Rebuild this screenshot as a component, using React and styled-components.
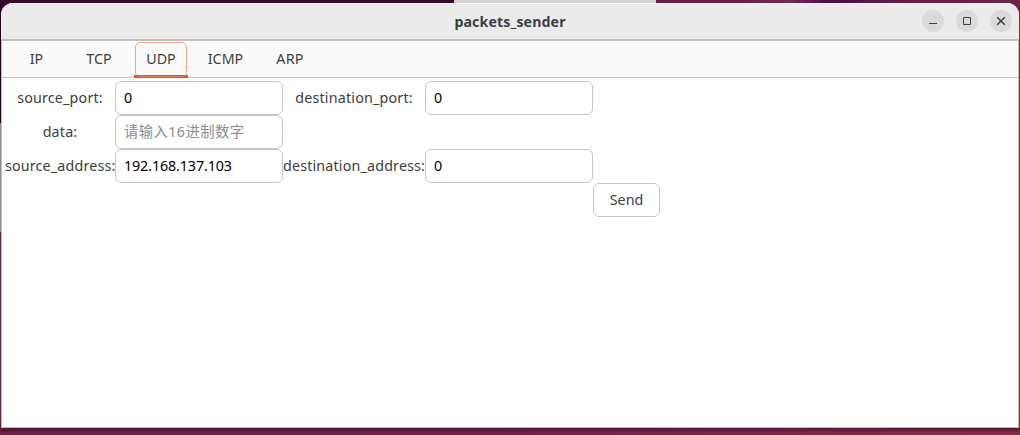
import React from 'react';
import styled, { createGlobalStyle } from 'styled-components';

const GlobalStyle = createGlobalStyle`
  * { box-sizing: border-box; }
  body { margin: 0; overflow: hidden; }
`;

const Desktop = styled.div`
  width: 1020px;
  height: 435px;
  padding: 3px 1px 7px;
  font-family: 'Noto Sans', 'Noto Sans CJK SC', sans-serif;
  font-size: 14.3px;
  color: #3d3d3d;
  background:
    linear-gradient(#24061e 0 0) 0 0 / 1px 123px no-repeat,
    linear-gradient(#8f8f8f 0 0) 0 123px / 1px 109px no-repeat,
    linear-gradient(90deg, #350a2a 0 454px, #d2d2d2 454px 656px, #65204a 656px 740px, #752a55 790px, #4d0a49 830px, #5d1c46 880px, #6d2448 1020px) 0 0 / 100% 20px no-repeat,
    linear-gradient(rgba(50, 10, 36, 0.6), transparent) 0 428px / 100% 5px no-repeat,
    linear-gradient(90deg, #6d2148, #6f214b 40%, #852c49);
`;

const Window = styled.main`
  display: flex;
  flex-direction: column;
  height: 425px;
  background: #fff;
  border-radius: 12px 12px 0 0;
  overflow: hidden;
`;

const TitleBar = styled.header`
  display: grid;
  grid-template-columns: 1fr auto 1fr;
  align-items: center;
  flex: 0 0 38px;
  padding-right: 7px;
  background: #ebebeb;
  border-top: 1px solid #f8f8f8;
  border-bottom: 2px solid #bfbfbf;
`;

const Title = styled.h1`
  grid-column: 2;
  margin: 0 0 0 7px;
  font-size: 14.2px;
  line-height: 20px;
  font-weight: 700;
  letter-spacing: ${(p) => p.$spacing}px;
`;

const WindowControls = styled.div`
  display: flex;
  justify-content: flex-end;
  gap: 12px;
  margin-top: -1px;
`;

const ControlButton = styled.button`
  display: flex;
  width: 22px;
  height: 22px;
  padding: 0;
  border: 0;
  border-radius: 50%;
  background: #dadada;
  color: #3d3d3d;
`;

const Body = styled.div`
  flex: 1;
  border: 1px solid #bdbdbd;
  border-top: 0;
`;

const TabBar = styled.nav`
  display: flex;
  height: 37px;
  background: #fafafa;
  border-bottom: 1px solid #c5c5c5;
`;

const Tab = styled.button`
  width: ${(p) => p.$width}px;
  height: 37px;
  margin: 0 0 0 ${(p) => p.$gap || 0}px;
  padding: 1px 1px 0;
  border: 0;
  background: ${(p) => (p.$active ? 'linear-gradient(#e95420 0 0) 0 100% / 100% 3px no-repeat' : 'transparent')};
  color: inherit;
  font: inherit;
  letter-spacing: ${(p) => p.$spacing}px;
`;

const TabFocus = styled.span`
  display: block;
  height: 35px;
  margin-bottom: 1px;
  line-height: 32px;
  border: 1px solid ${(p) => (p.$active ? 'rgba(240, 132, 96, 0.75)' : 'transparent')};
  border-radius: 5px;
`;

const Form = styled.form`
  display: grid;
  grid-template-columns: 110px 168px 142px 168px 67px;
  grid-auto-rows: 34px;
  padding: 3px 0 0 3px;
`;

const Label = styled.label`
  grid-column: ${(p) => p.$column};
  text-align: center;
  line-height: 33px;
  white-space: nowrap;
  letter-spacing: ${(p) => p.$spacing}px;
`;

const Field = styled.input`
  width: 100%;
  height: 34px;
  padding: 0 8px 1px;
  border: 1px solid #c6c6c6;
  border-radius: 6px;
  outline: 0;
  background: #fff;
  color: #000;
  font: inherit;
  letter-spacing: ${(p) => p.$spacing || 0}px;
  &::placeholder { color: #8b8b8b; opacity: 1; }
`;

const SendButton = styled.button`
  grid-column: 5;
  grid-row: 4;
  padding: 0 0 1px;
  border: 1px solid #c6c6c6;
  border-radius: 6px;
  background: #fff;
  color: inherit;
  font: inherit;
`;

const tabs = [
  { name: 'IP', width: 69, spacing: 0 },
  { name: 'TCP', width: 56, spacing: 0 },
  { name: 'UDP', width: 54, gap: 7, spacing: 0, active: true },
  { name: 'ICMP', width: 75, spacing: 0 },
  { name: 'ARP', width: 54, spacing: 0.2 },
];

function ControlIcon({ children }) {
  return (
    <svg width="22" height="22" viewBox="0 0 22 22" fill="none" stroke="currentColor">
      {children}
    </svg>
  );
}

export default function App() {
  return (
    <Desktop>
      <GlobalStyle />
      <Window>
        <TitleBar>
          <Title $spacing={0.1}>packets_sender</Title>
          <WindowControls>
            <ControlButton aria-label="Minimize">
              <ControlIcon><path d="M7 13.5h8" /></ControlIcon>
            </ControlButton>
            <ControlButton aria-label="Maximize">
              <ControlIcon><path d="M7.5 7.5h7v7h-7z" /></ControlIcon>
            </ControlButton>
            <ControlButton aria-label="Close">
              <ControlIcon><path d="M7.2 7.2l7.6 7.6M14.8 7.2l-7.6 7.6" strokeWidth="1.5" /></ControlIcon>
            </ControlButton>
          </WindowControls>
        </TitleBar>
        <Body>
          <TabBar>
            {tabs.map((t) => (
              <Tab key={t.name} $width={t.width} $gap={t.gap} $spacing={t.spacing} $active={t.active}>
                <TabFocus $active={t.active}>{t.name}</TabFocus>
              </Tab>
            ))}
          </TabBar>
          <Form onSubmit={(e) => e.preventDefault()}>
            <Label $column={1} $spacing={0.18}>source_port:</Label>
            <Field defaultValue="0" />
            <Label $column={3} $spacing={0.18}>destination_port:</Label>
            <Field defaultValue="0" />
            <Label $column={1} $spacing={0.18}>data:</Label>
            <Field placeholder="请输入16进制数字" $spacing={0.45} />
            <Label $column={1} $spacing={0.16}>source_address:</Label>
            <Field defaultValue="192.168.137.103" $spacing={-0.12} />
            <Label $column={3} $spacing={0.16}>destination_address:</Label>
            <Field defaultValue="0" />
            <SendButton type="submit">Send</SendButton>
          </Form>
        </Body>
      </Window>
    </Desktop>
  );
}
